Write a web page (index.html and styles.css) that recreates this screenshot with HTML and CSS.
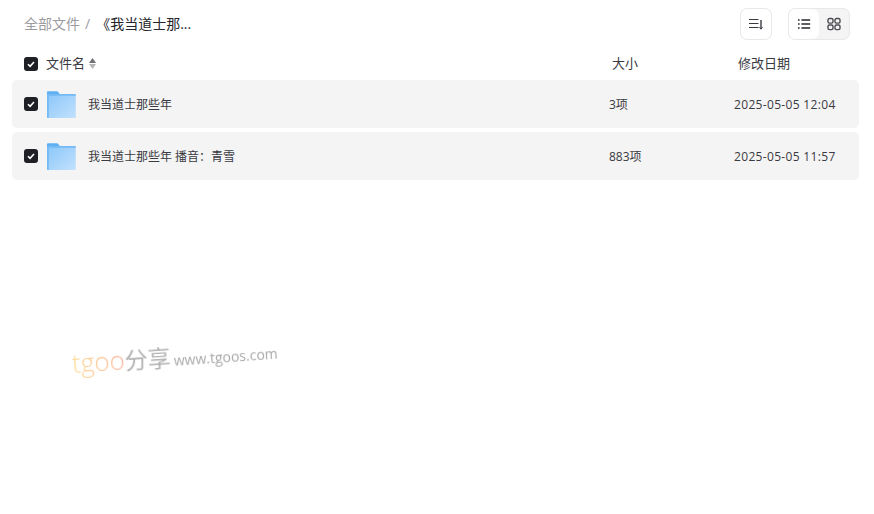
FILE: index.html
```html
<!DOCTYPE html>
<html lang="zh-CN">
<head>
  <meta charset="UTF-8" />
  <title>全部文件</title>
  <link rel="stylesheet" href="styles.css">
</head>
<body>
  <header class="toolbar">
    <div class="crumbs">
      <span class="crumb-root">全部文件</span>
      <span class="crumb-sep">/</span>
      <span class="crumb-current">《我当道士那...</span>
    </div>
    <div class="tools">
      <button class="tool-btn">
        <svg width="16" height="16" viewBox="0 0 16 16" fill="none" stroke="#3a3a42" stroke-width="1.2">
          <path d="M1 3.5h9.5M1 7.5h9.5M1 11.5h9.5"/>
          <path d="M13 4v8.5" stroke-width="1.4"/>
          <path d="M11.4 11.2l1.6 2 1.6-2" stroke-width="1"/>
        </svg>
      </button>
      <div class="view-switch">
        <span class="view-opt view-active">
          <svg width="14" height="14" viewBox="0 0 14 14" fill="none" stroke="#26262d" stroke-width="1.3">
            <path d="M1 3h1.6M1 7h1.6M1 11h1.6M4.4 3h8.8M4.4 7h8.8M4.4 11h8.8"/>
          </svg>
        </span>
        <span class="view-opt">
          <svg width="14" height="14" viewBox="0 0 14 14" fill="none" stroke="#4a4a51" stroke-width="1.4">
            <rect x="1" y="1.5" width="5" height="4.6" rx="1.4"/>
            <rect x="8" y="1.5" width="5" height="4.6" rx="1.4"/>
            <rect x="1" y="8" width="5" height="4.6" rx="1.4"/>
            <rect x="8" y="8" width="5" height="4.6" rx="1.4"/>
          </svg>
        </span>
      </div>
    </div>
  </header>

  <div class="list-head">
    <div class="col-name">
      <span class="check"><svg width="10" height="10" viewBox="0 0 10 10"><path d="M2 5.2l2.1 2.1L8 3" fill="none" stroke="#fff" stroke-width="1.6"/></svg></span>
      <span>文件名</span>
      <span class="sort"><i class="sort-up"></i><i class="sort-down"></i></span>
    </div>
    <div class="col-size">大小</div>
    <div class="col-date">修改日期</div>
  </div>

  <div class="rows">
    <div class="row">
      <span class="check"><svg width="10" height="10" viewBox="0 0 10 10"><path d="M2 5.2l2.1 2.1L8 3" fill="none" stroke="#fff" stroke-width="1.6"/></svg></span>
      <svg class="folder" width="30" height="27" viewBox="0 0 30 28" preserveAspectRatio="none">
        <defs>
          <linearGradient id="folderFill" x1="0" y1="0" x2="1" y2="1">
            <stop offset="0" stop-color="#8ac6f9"/>
            <stop offset="1" stop-color="#c2e1fd"/>
          </linearGradient>
        </defs>
        <path d="M1 1.5C1 .8 1.5.3 2.2.3h8.6c.6 0 1 .2 1.4.7l1.6 2h-13z" fill="#5fb0f3"/>
        <path d="M1 3h27.8c.6 0 1 .4 1 1v23c0 .6-.4 1-1 1H2c-.6 0-1-.4-1-1z" fill="url(#folderFill)"/>
        <path d="M1 3v24c0 .6.4 1 1 1h.8V6c0-.6.4-1 1-1h26V4c0-.6-.4-1-1-1z" fill="#74baf6"/>
      </svg>
      <span class="row-name">我当道士那些年</span>
      <span class="row-size">3项</span>
      <span class="row-date">2025-05-05 12:04</span>
    </div>
    <div class="row">
      <span class="check"><svg width="10" height="10" viewBox="0 0 10 10"><path d="M2 5.2l2.1 2.1L8 3" fill="none" stroke="#fff" stroke-width="1.6"/></svg></span>
      <svg class="folder" width="30" height="27" viewBox="0 0 30 28" preserveAspectRatio="none">
        <path d="M1 1.5C1 .8 1.5.3 2.2.3h8.6c.6 0 1 .2 1.4.7l1.6 2h-13z" fill="#5fb0f3"/>
        <path d="M1 3h27.8c.6 0 1 .4 1 1v23c0 .6-.4 1-1 1H2c-.6 0-1-.4-1-1z" fill="url(#folderFill)"/>
        <path d="M1 3v24c0 .6.4 1 1 1h.8V6c0-.6.4-1 1-1h26V4c0-.6-.4-1-1-1z" fill="#74baf6"/>
      </svg>
      <span class="row-name">我当道士那些年 播音：青雪</span>
      <span class="row-size">883项</span>
      <span class="row-date">2025-05-05 11:57</span>
    </div>
  </div>

  <div class="watermark">
    <span class="wm-tgoo">tgoo</span><span class="wm-cn">分享</span><span class="wm-url">www.tgoos.com</span>
  </div>
</body>
</html>
```

FILE: styles.css
```css
:root {
  --text: #3a3a42;
  --muted: #9b9b9f;
  --row-bg: #f4f4f4;
  --line: #e8e8ea;
}
* { box-sizing: border-box; }
body {
  margin: 0;
  height: 514px;
  background: #fff;
  color: var(--text);
  font-family: "Open Sans", "Noto Sans CJK SC", sans-serif;
  font-size: 12px;
  overflow: hidden;
  position: relative;
}
.toolbar {
  display: flex; justify-content: space-between; align-items: center;
  height: 48px; padding: 0 24px;
}
.crumbs { display: flex; align-items: center; font-size: 14px; line-height: 20px; }
.crumb-root { color: var(--muted); }
.crumb-sep { color: var(--muted); margin: 0 6px 0 5px; }
.crumb-current { color: #25252c; }
.tools { display: flex; gap: 16px; align-items: center; }
.tool-btn {
  width: 32px; height: 32px; padding: 0;
  display: flex; align-items: center; justify-content: center;
  background: #fff; border: 1px solid var(--line); border-radius: 7px;
}
.view-switch {
  display: flex; width: 62px; height: 32px;
  border: 1px solid var(--line); border-radius: 7px;
  background: var(--row-bg); overflow: hidden;
}
.view-opt {
  flex: 1; display: flex; align-items: center; justify-content: center;
}
.view-active { background: #fff; border-radius: 0 7px 7px 0; }

.list-head {
  display: flex; align-items: center;
  height: 32px; padding: 0 0 1px 24px;
  font-size: 13px; line-height: 18px;
}
.col-name { display: flex; align-items: center; gap: 8px; width: 588px; }
.col-size, .col-date, .col-name > span:nth-child(2) { padding-bottom: 2px; }
.col-size { width: 126px; }
.check {
  width: 14px; height: 14px; flex: none;
  display: flex; align-items: center; justify-content: center;
  background: #1f1f26; border-radius: 3px;
}
.sort { display: flex; flex-direction: column; gap: 1px; margin-left: -4px; }
.sort i { display: block; width: 7px; height: 5px; }
.sort-up { background: #6f6f74; clip-path: polygon(50% 0, 100% 100%, 0 100%); }
.sort-down { background: #b5b5b8; clip-path: polygon(0 0, 100% 0, 50% 100%); }

.rows {
  display: flex; flex-direction: column; gap: 4px;
  margin: 0 15px 0 12px;
}
.row {
  display: flex; align-items: center;
  height: 48px; padding-left: 12px;
  background: var(--row-bg); border-radius: 5px;
}
.folder { flex: none; margin: 1px 12px 0 8px; }
.row-name { width: 521px; }
.row-size { width: 125px; }
.row-date { white-space: nowrap; letter-spacing: .33px; }

.watermark {
  position: absolute; left: 72px; top: 345px;
  display: flex; align-items: baseline;
  transform: rotate(-4deg); transform-origin: left center;
  filter: blur(.35px);
}
.wm-tgoo {
  font-size: 26px; font-weight: 300;
  background: linear-gradient(90deg, #fdd98f, #fbb5a0);
  -webkit-background-clip: text; background-clip: text; color: transparent;
}
.wm-cn { font-size: 23px; color: #b2b2b2; }
.wm-url { font-size: 14px; color: #a8a8a8; margin-left: 3px; }
```
